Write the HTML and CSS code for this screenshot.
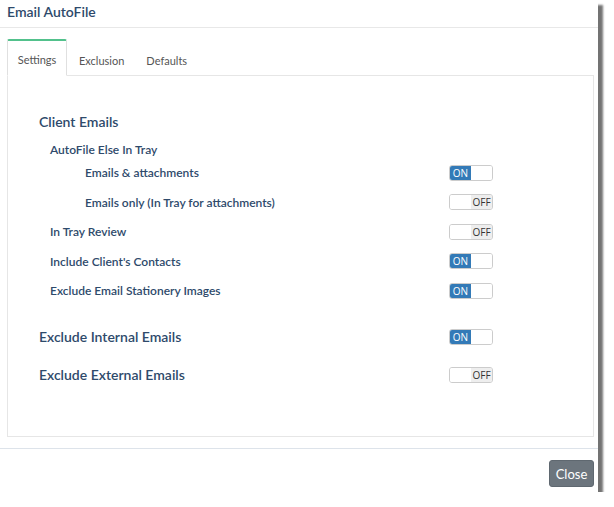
FILE: index.html
```html
<!DOCTYPE html>
<html lang="en">
<head>
    <meta charset="UTF-8">
    <meta name="viewport" content="width=device-width, initial-scale=1.0">
    <title>Email AutoFile</title>
    <link rel="stylesheet" href="styles.css">
</head>
<body>

    <div class="modal">

        <!-- Header -->
        <div class="modal-header">
            <h4 class="modal-title">Email AutoFile</h4>
        </div>

        <!-- Tabs -->
        <div class="modal-body">
            <ul class="tabs">
                <li class="tab active">Settings</li>
                <li class="tab">Exclusion</li>
                <li class="tab">Defaults</li>
            </ul>

            <div class="tab-panel">
                <div class="row row-head row-first">
                    <span class="label">Client Emails</span>
                </div>
                <div class="row row-sub row-autofile">
                    <span class="label">AutoFile Else In Tray</span>
                </div>
                <div class="row row-indent row-tight">
                    <span class="label">Emails &amp; attachments</span>
                    <span class="switch on"><span class="on-part">ON</span><span class="blank"></span></span>
                </div>
                <div class="row row-indent">
                    <span class="label">Emails only (In Tray for attachments)</span>
                    <span class="switch off"><span class="blank"></span><span class="off-part">OFF</span></span>
                </div>
                <div class="row row-sub">
                    <span class="label">In Tray Review</span>
                    <span class="switch off"><span class="blank"></span><span class="off-part">OFF</span></span>
                </div>
                <div class="row row-sub">
                    <span class="label">Include Client's Contacts</span>
                    <span class="switch on"><span class="on-part">ON</span><span class="blank"></span></span>
                </div>
                <div class="row row-sub">
                    <span class="label">Exclude Email Stationery Images</span>
                    <span class="switch on"><span class="on-part">ON</span><span class="blank"></span></span>
                </div>
                <div class="row row-head row-internal">
                    <span class="label">Exclude Internal Emails</span>
                    <span class="switch on"><span class="on-part">ON</span><span class="blank"></span></span>
                </div>
                <div class="row row-head row-external">
                    <span class="label">Exclude External Emails</span>
                    <span class="switch off"><span class="blank"></span><span class="off-part">OFF</span></span>
                </div>
            </div>
        </div>

        <!-- Footer -->
        <div class="modal-footer">
            <button class="btn-close">Close</button>
        </div>

    </div>

</body>
</html>
```

FILE: styles.css
```css
/* General Body Styles */
body {
    font-family: Lato, 'Open Sans', sans-serif;
    background-color: #fff;
    margin: 0;
    padding: 0;
    color: #2e4a6b;
}

/* Modal box */
.modal {
    width: 598px;
    height: 492px;
    background-color: #fff;
    box-shadow: 5px 5px 2px rgba(0, 0, 0, 0.55);
    display: flex;
    flex-direction: column;
}

.modal-header {
    height: 27px;
    border-bottom: 1px solid #e8e8e8;
    padding-left: 7px;
    display: flex;
    align-items: center;
}

.modal-title {
    margin: 0;
    font-size: 14px;
    font-weight: 600;
    color: #2e4a6b;
    position: relative;
    top: -2px;
}

.modal-body {
    padding: 11px 4px 0 7px;
}

/* Tabs */
.tabs {
    list-style: none;
    margin: 0 0 -1px 0;
    padding: 0;
    display: flex;
    height: 37px;
}

.tab {
    padding: 3px 10px 0 12px;
    font-size: 11px;
    color: #555;
    display: flex;
    align-items: center;
    box-sizing: border-box;
    border-top: 2px solid transparent;
}

.tab.active {
    width: 60px;
    padding: 3px 0 0 0;
    justify-content: center;
    background-color: #fff;
    border: 1px solid #e0e0e0;
    border-top: 2px solid #52c18c;
    border-bottom-color: #fff;
    border-radius: 2px 2px 0 0;
    position: relative;
    z-index: 1;
}

.tab-panel {
    height: 362px;
    box-sizing: border-box;
    border: 1px solid #e6e6e6;
    padding: 35px 0 0 31px;
}

/* Setting rows */
.row {
    width: 454px;
    height: 20px;
    margin-top: 9.5px;
    display: flex;
    align-items: center;
    justify-content: space-between;
}

.row-first {
    margin-top: 0;
}

.row-autofile {
    margin-top: 8px;
}

.row-tight {
    margin-top: 3.5px;
}

.row-internal {
    margin-top: 26px;
}

.row-external {
    margin-top: 18px;
}

.row-head .label {
    font-size: 14px;
    font-weight: 600;
}

.row-sub .label {
    font-size: 12px;
    font-weight: 600;
    padding-left: 11px;
}

.row-indent .label {
    font-size: 12px;
    font-weight: 600;
    padding-left: 46px;
}

/* Toggle switch */
.switch {
    width: 44px;
    height: 16px;
    box-sizing: border-box;
    border: 1px solid #ccc;
    border-radius: 3px;
    display: flex;
    overflow: hidden;
    font-size: 10px;
    font-family: 'Open Sans', sans-serif;
}

.switch span {
    flex: 1;
    display: flex;
    align-items: center;
    justify-content: center;
}

.on-part {
    background-color: #337ab7;
    color: #fff;
}

.off-part {
    background-color: #eee;
    color: #333;
}

.blank {
    background-color: #fff;
}

/* Footer */
.modal-footer {
    margin-top: 11px;
    border-top: 1px solid #dde3ea;
    padding: 11px 4px 0 0;
    display: flex;
    justify-content: flex-end;
}

.btn-close {
    width: 45px;
    height: 27px;
    padding: 0;
    font-family: Lato, sans-serif;
    font-size: 13px;
    color: #fff;
    background-color: #6c757d;
    border: 1px solid #5f6870;
    border-radius: 3px;
    cursor: pointer;
}
```
